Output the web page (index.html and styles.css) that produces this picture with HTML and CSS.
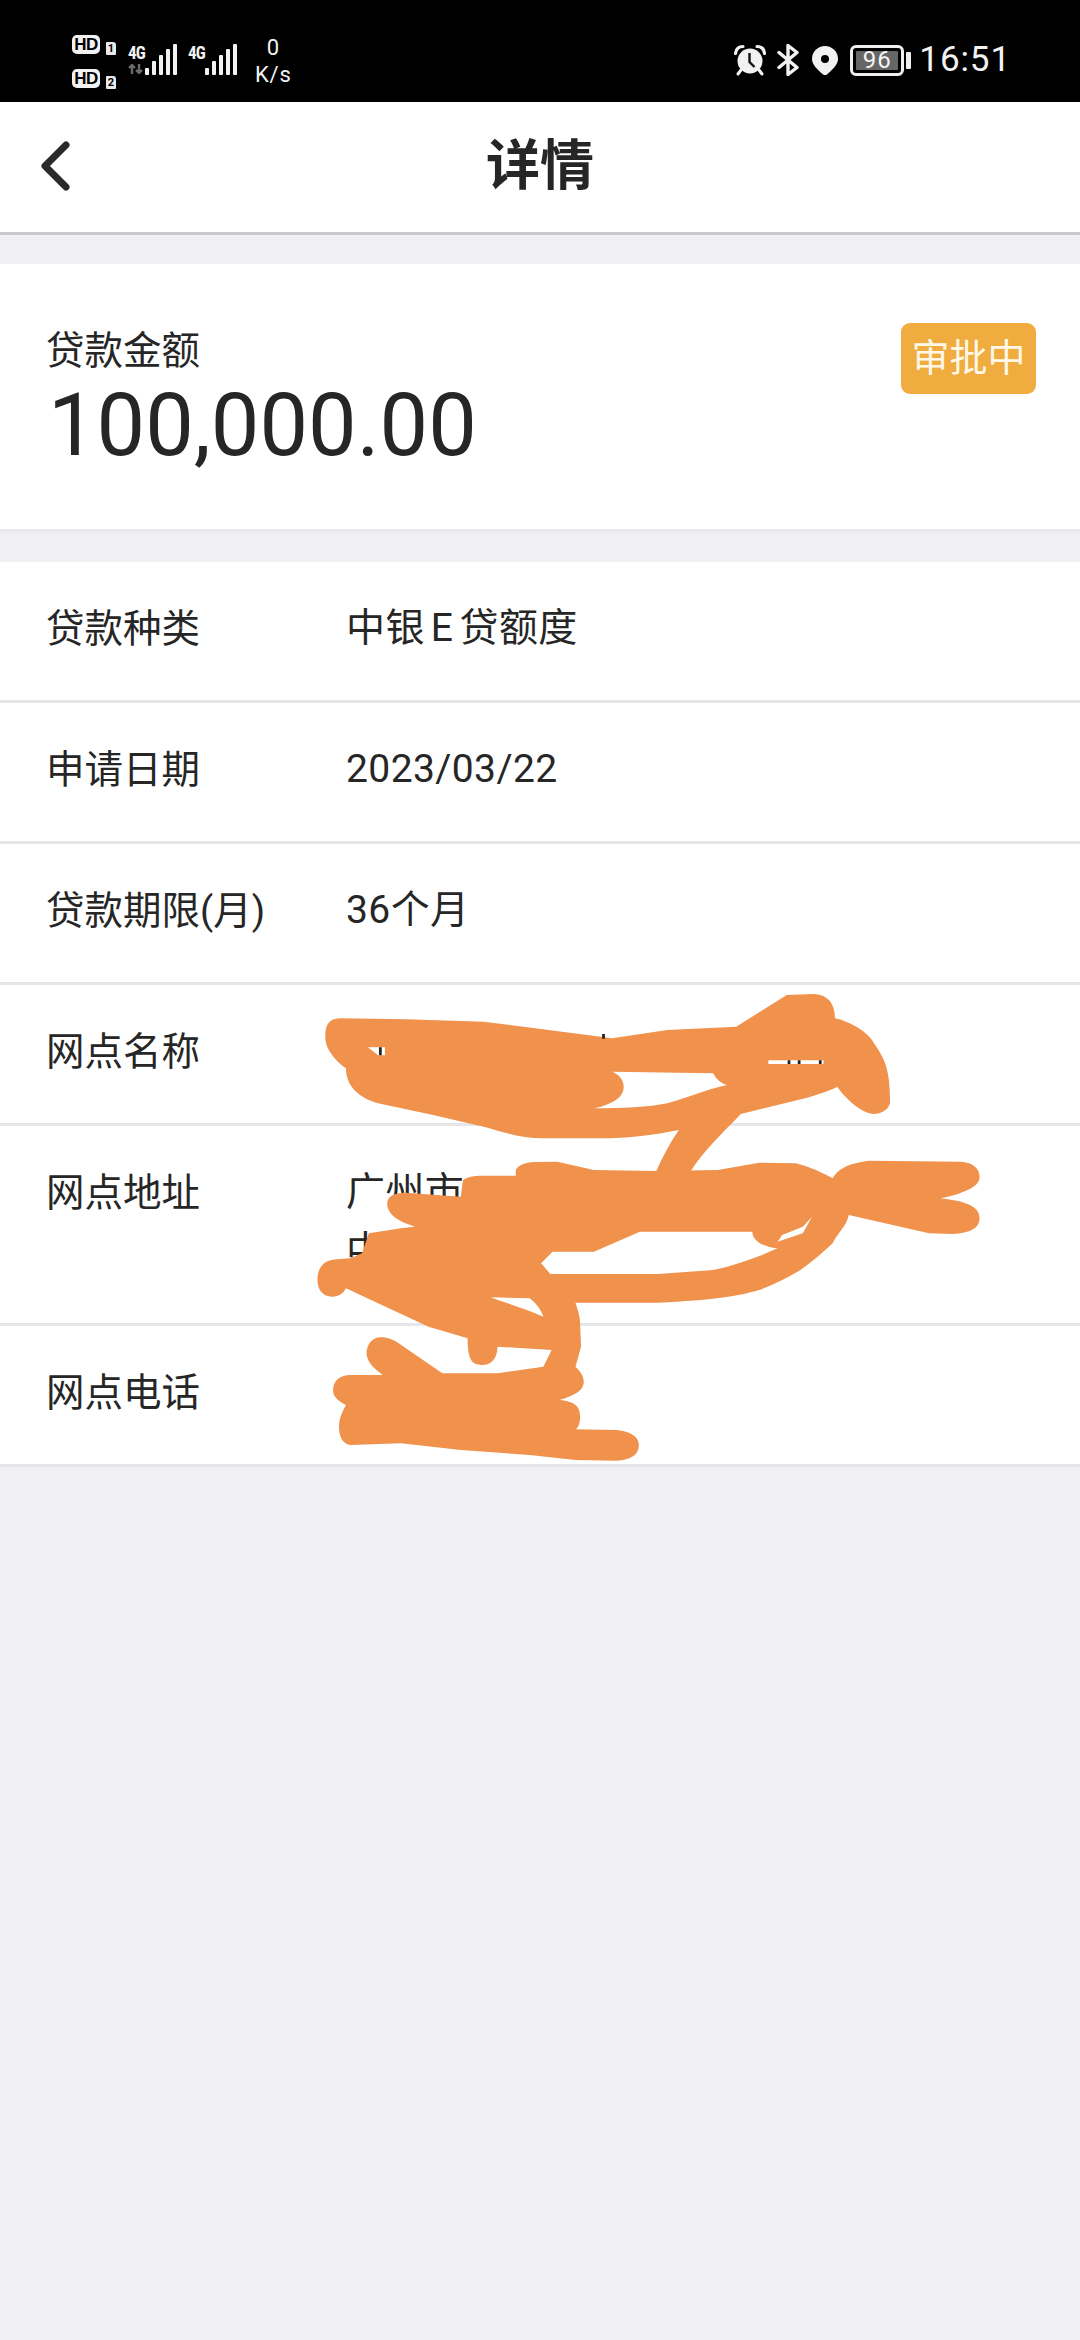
FILE: index.html
```html
<!DOCTYPE html>
<html lang="zh">
<head>
<meta charset="utf-8">
<title>详情</title>
<link rel="stylesheet" href="styles.css">
</head>
<body>
<div class="page">
  <div class="status">
    <div class="status-left">
      <div class="sims">
        <div class="sim"><span class="hd">HD</span><span class="slot">1</span></div>
        <div class="sim"><span class="hd">HD</span><span class="slot">2</span></div>
      </div>
      <div class="net">
        <div class="net-labels"><span class="gen">4G</span><svg class="updown" viewBox="0 0 16 10"><path d="M4 10V1M1 4l3-3 3 3M11 0v9M8 6l3 3 3-3" fill="none" stroke="#6a6a6a" stroke-width="2.4"/></svg></div>
        <svg class="bars" viewBox="0 0 32 31"><rect x="0" y="24" width="4" height="7" rx="1"/><rect x="7" y="17" width="4" height="14" rx="1"/><rect x="14" y="11" width="4" height="20" rx="1"/><rect x="21" y="5" width="4" height="26" rx="1"/><rect x="28" y="0" width="4" height="31" rx="1"/></svg>
      </div>
      <div class="net net-b">
        <div class="net-labels"><span class="gen">4G</span></div>
        <svg class="bars" viewBox="0 0 32 31"><rect x="0" y="24" width="4" height="7" rx="1"/><rect x="7" y="17" width="4" height="14" rx="1"/><rect x="14" y="11" width="4" height="20" rx="1"/><rect x="21" y="5" width="4" height="26" rx="1"/><rect x="28" y="0" width="4" height="31" rx="1"/></svg>
      </div>
      <div class="speed"><span>0</span><span>K/s</span></div>
    </div>
    <div class="status-right">
      <svg class="ic-alarm" viewBox="0 0 32 32"><circle cx="16" cy="17" r="12.5" fill="#f2f2f2"/><path d="M15.500 9v9l5 5" fill="none" stroke="#111" stroke-width="2.400"/><path d="M1.500 9.500C2 5 5 2.500 9 2.500M30.500 9.500C30 5 27 2.500 23 2.500" fill="none" stroke="#f2f2f2" stroke-width="3.200" stroke-linecap="round"/><path d="M7 26l-3 4M25 26l3 4" stroke="#f2f2f2" stroke-width="3" stroke-linecap="round"/></svg>
      <svg class="ic-bt" viewBox="0 0 22 32"><path d="M2 8.500l18 15-9 7V1.500l9 7-18 15" fill="none" stroke="#f2f2f2" stroke-width="3.400" stroke-linejoin="round" stroke-linecap="round"/></svg>
      <svg class="ic-pin" viewBox="0 0 26 29"><path fill-rule="evenodd" fill="#f2f2f2" d="M13 0a13 13 0 0 1 13 13c0 6-6 11-10.500 15a3.500 3.500 0 0 1-5 0C6 24 0 19 0 13A13 13 0 0 1 13 0zm0 9a4 4 0 1 0 0 8 4 4 0 0 0 0-8z"/></svg>
      <div class="battery">
        <div class="batt-body"><span class="batt-fill">96</span></div>
        <div class="batt-nub"></div>
      </div>
      <span class="clock">16:51</span>
    </div>
  </div>

  <header class="nav">
    <svg class="back" viewBox="0 0 30 50"><path d="M26 4 5 25l21 21" fill="none" stroke="#2b2b2b" stroke-width="7" stroke-linecap="round" stroke-linejoin="round"/></svg>
    <h1 class="title">详情</h1>
  </header>

  <section class="amount-card">
    <div class="amount-text">
      <div class="amount-label">贷款金额</div>
      <div class="amount-value">100,000.00</div>
    </div>
    <div class="badge">审批中</div>
  </section>

  <section class="list">
    <div class="row"><div class="key">贷款种类</div><div class="val">中银 E 贷额度</div></div>
    <div class="row"><div class="key">申请日期</div><div class="val">2023/03/22</div></div>
    <div class="row"><div class="key">贷款期限(月)</div><div class="val">36个月</div></div>
    <div class="row"><div class="key">网点名称</div><div class="val"></div></div>
    <div class="row"><div class="key">网点地址</div><div class="val">广州市<br>中</div></div>
    <div class="row"><div class="key">网点电话</div><div class="val"></div></div>
  </section>

  <svg class="scribble" viewBox="0 0 1568 1500" preserveAspectRatio="none">
    <path class="ink" fill-rule="evenodd" d="M55 200 C55 160 65 145 90 145 L230 148 L400 155 L680 205 L800 180 L950 170 L1060 75 L1120 72 C1150 75 1165 100 1165 145 C1200 155 1240 190 1250 220 C1275 270 1285 300 1285 400 C1280 425 1260 432 1250 432 C1225 430 1190 390 1170 350 C1150 365 1100 385 1100 385 L960 432 C920 490 880 540 850 605 L775 605 C790 560 805 520 825 480 C770 495 720 505 650 505 L530 505 C480 505 440 485 400 470 L290 435 L170 400 C130 385 100 350 100 295 C80 275 55 240 55 200 Z M640 415 C690 400 705 375 705 350 C705 325 690 310 680 305 L900 310 C905 325 915 340 930 345 C880 360 840 385 800 400 C760 412 700 415 640 415 Z"/>
    <path class="ink" fill-rule="evenodd" d="M470 600 C475 585 490 578 510 576 L560 575 L640 600 L775 603 L910 600 L1000 578 L1080 580 C1110 590 1140 610 1160 625 C1170 600 1190 580 1240 572 L1440 575 C1470 578 1480 600 1480 620 C1480 645 1460 665 1395 685 C1460 695 1480 715 1480 745 C1480 775 1460 790 1420 792 L1370 790 L1195 735 C1190 770 1170 790 1160 820 C1130 860 1100 890 1090 900 C1060 925 1030 945 1000 960 C950 980 900 990 780 998 L600 998 C605 1020 610 1040 610 1060 L612 1130 L600 1190 C612 1205 618 1220 618 1235 C618 1260 600 1275 565 1290 C600 1295 610 1310 610 1340 C610 1360 605 1375 600 1378 L690 1380 C720 1385 738 1400 738 1425 C738 1455 720 1470 690 1472 L600 1470 L500 1455 L350 1440 L220 1420 L110 1425 C90 1420 85 1395 85 1370 C85 1340 95 1320 100 1305 C80 1290 72 1280 72 1260 C72 1235 85 1215 110 1215 L180 1215 C155 1190 145 1170 145 1150 C145 1120 160 1102 175 1102 C190 1102 200 1108 210 1115 L310 1210 L430 1210 L530 1190 L548 1140 L430 1130 C430 1160 420 1185 395 1185 C375 1185 365 1170 365 1105 L280 1070 L170 1000 L100 955 C95 970 85 980 70 980 C50 980 38 960 38 930 C38 895 50 870 80 868 L110 865 L135 850 L150 790 L220 775 L250 770 C215 755 190 735 190 700 C190 680 205 668 230 668 L350 680 L355 630 C365 620 380 617 395 617 L470 617 Z M525 880 L550 845 L640 845 L740 785 L985 785 C985 805 1000 830 1040 835 C1000 860 950 885 900 900 L780 912 L545 912 Z M1040 815 L1050 795 L1095 770 L1115 740 L1095 790 Z M415 982 L500 985 C515 1000 525 1020 530 1040 C490 1015 450 1000 415 982 Z"/>
    <path class="peek" d="M148 232 L185 232 L185 256 L170 256 Z"/>
    <path class="peek" d="M1020 271 H1140 V282 H1020 Z"/>
    <path class="tick" d="M172 232 H178 V256 H172 Z M658 192 H664 V206 H658 Z M1062 271 H1068 V282 H1062 Z M1084 271 H1090 V282 H1084 Z M1130 271 H1136 V282 H1130 Z"/>
  </svg>
</div>
</body>
</html>
```

FILE: styles.css
```css
* { box-sizing: border-box; }
html, body { margin: 0; padding: 0; }
body { font-family: Roboto, "Noto Sans CJK SC", sans-serif; color: #262626; background: #efeff4; }
.page { position: relative; width: 1080px; height: 2340px; overflow: hidden; background: #efeff4; display: flex; flex-direction: column; }

/* status bar */
.status { height: 102px; flex: none; background: #000; color: #f2f2f2; display: flex; justify-content: space-between; align-items: center; padding: 18px 69px 0 72px; }
.status-left { display: flex; align-items: center; height: 60px; }
.sims { display: flex; flex-direction: column; gap: 15px; margin-top: 3px; }
.sim { display: flex; align-items: flex-end; gap: 6px; }
.hd { width: 28px; height: 19px; border-radius: 5px; background: #f2f2f2; color: #000; font: 700 17px/19px "Liberation Sans", sans-serif; text-align: center; letter-spacing: -0.5px; }
.slot { width: 10px; height: 13px; margin-bottom: -1px; border-radius: 1px 3px 1px 1px; background: #e8e8e8; color: #000; font: 700 11px/13px Roboto, sans-serif; text-align: center; }
.net { display: flex; align-items: flex-end; margin-left: 12px; height: 31px; margin-top: -2px; }
.net-b { margin-left: 11px; }
.net-labels { display: flex; flex-direction: column; align-items: flex-start; width: 17px; height: 31px; }
.gen { font: 700 19px/17px "Liberation Sans Narrow", "Roboto Condensed", Roboto, sans-serif; letter-spacing: -1px; transform: scaleX(0.9); transform-origin: left; margin-top: 0; }
.updown { width: 16px; height: 10px; margin-top: 3px; }
.bars { width: 32px; height: 31px; fill: #f2f2f2; }
.speed { display: flex; flex-direction: column; align-items: center; margin-left: 18px; font: 400 22px/27px Roboto, sans-serif; margin-top: 2px; letter-spacing: 0.8px; }

.status-right { display: flex; align-items: center; }
.ic-alarm { width: 32px; height: 32px; }
.ic-bt { width: 22px; height: 32px; margin-left: 11px; }
.ic-pin { width: 26px; height: 29px; margin-left: 13px; }
.battery { display: flex; align-items: center; margin-left: 12px; }
.batt-body { width: 54px; height: 31px; border: 3px solid #efefef; border-radius: 6px; padding: 3px; display: flex; }
.batt-fill { flex: 1; background: #666; border-radius: 1px; color: #f4f4f4; font: 400 24px/19px Roboto, sans-serif; text-align: center; letter-spacing: 1px; }
.batt-nub { width: 5px; height: 17px; margin-left: 2px; background: #efefef; border-radius: 1px; }
.clock { margin-left: 8px; font: 400 35px/40px Roboto, sans-serif; letter-spacing: 0.9px; }

/* nav */
.nav { position: relative; height: 133px; flex: none; background: #fff; border-bottom: 3px solid #c9c9ce; display: flex; align-items: center; justify-content: center; }
.back { position: absolute; left: 40px; top: 39px; width: 30px; height: 50px; }
.title { margin: 0; font-size: 54px; line-height: 70px; font-weight: 700; color: #262626; }

/* amount */
.amount-card { flex: none; margin-top: 29px; height: 268px; background: #fff; border-bottom: 3px solid #e9e9ed; padding: 60px 44px 0 46px; display: flex; justify-content: space-between; align-items: flex-start; }
.amount-label { font-size: 38.5px; line-height: 54px; }
.amount-value { font-size: 86.5px; line-height: 102px; margin-top: -3px; margin-left: 2px; }
.badge { width: 135px; height: 71px; margin-top: -1px; border-radius: 9px; background: #f0ac3f; color: #fff8e8; font-size: 38px; line-height: 71px; text-align: center; }

/* rows */
.list { flex: none; margin-top: 30px; background: #fff; }
.row { display: flex; padding: 37px 0 42px 46px; border-bottom: 3px solid #e6e6ea; font-size: 38.5px; line-height: 59px; }
.key { width: 300px; flex: none; }
.val { flex: 1; min-height: 59px; font-size: 39px; letter-spacing: 0.4px; word-spacing: -4px; }

/* hand-drawn redaction over the rows */
.scribble { position: absolute; left: 300px; top: 970px; width: 720px; height: 500px; }
.ink { fill: #f0914c; }
.peek { fill: #fff; }
.tick { fill: #222; }
```
